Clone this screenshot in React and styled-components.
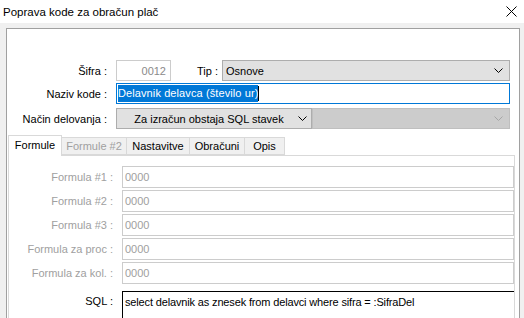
import React from 'react';
import styled, { createGlobalStyle } from 'styled-components';

const Global = createGlobalStyle`
  html, body { margin: 0; padding: 0; background: #f0f0f0; }
  body { font-family: "Liberation Sans", Arial, sans-serif; font-size: 11px; color: #000; }
  * { box-sizing: border-box; }
`;

const Window = styled.div`
  width: 524px;
  height: 318px;
  overflow: hidden;
  background: #f0f0f0;
  display: flex;
  flex-direction: column;
`;

const TitleBar = styled.div`
  height: 23px;
  flex: none;
  background: #fff;
  display: flex;
  align-items: center;
  justify-content: space-between;
  padding: 0 7px 0 3px;
  font-size: 11.5px;
`;

const Body = styled.div`
  flex: 1;
  min-height: 0;
  display: flex;
  padding: 5px 4px 0 6px;
`;

const Panel = styled.div`
  flex: 1;
  background: #fff;
  border: 1px solid #a0a0a0;
  border-bottom: none;
  display: flex;
  flex-direction: column;
  padding-top: 31px;
`;

const FormRow = styled.div`
  display: flex;
  align-items: center;
  height: 21px;
  margin-top: ${p => p.$gap || 0}px;
`;

const Label = styled.div`
  width: ${p => p.$w || 100}px;
  padding-right: ${p => p.$pr || 0}px;
  text-align: right;
  flex: none;
  color: ${p => (p.$muted ? '#a0a0a0' : '#000')};
  white-space: nowrap;
`;

const Field = styled.div`
  margin-left: ${p => p.$ml ?? 9}px;
  width: ${p => p.$w}px;
  height: 21px;
  flex: none;
  display: flex;
  align-items: center;
  border: 1px solid ${p => p.$border || '#cccccc'};
  background: ${p => p.$bg || '#fff'};
  color: ${p => p.$color || '#000'};
  justify-content: ${p => p.$justify || 'flex-start'};
  padding: 0 ${p => p.$pr ?? 3}px 0 ${p => p.$pl ?? 3}px;
  white-space: nowrap;
  overflow: hidden;
`;

const SelectText = styled.span`
  flex: 1;
  text-align: ${p => p.$align || 'left'};
`;

const Selected = styled.span`
  background: #0078d7;
  color: #fff;
  padding: 1px 0;
  line-height: 15px;
  letter-spacing: 0.1px;
`;

const Caret = styled.span`
  width: 1px;
  height: 15px;
  background: #000;
`;

const Chevron = ({ color = '#000' }) => (
  <svg width="9" height="5" viewBox="0 0 9 5" style={{ flex: 'none' }}>
    <polyline points="0.5,0.5 4.5,4.5 8.5,0.5" fill="none" stroke={color} strokeWidth="1" />
  </svg>
);

const TabArea = styled.div`
  flex: 1;
  display: flex;
  flex-direction: column;
  margin: 6px 4px 0 1px;
`;

const TabStrip = styled.div`
  display: flex;
  align-items: flex-end;
  height: 20px;
  position: relative;
  z-index: 1;
`;

const Tab = styled.div`
  width: ${p => p.$w}px;
  height: ${p => (p.$active ? 21 : 18)}px;
  margin-bottom: ${p => (p.$active ? -1 : 0)}px;
  margin-left: ${p => (p.$first ? 0 : -1)}px;
  border: 1px solid #d9d9d9;
  border-bottom: ${p => (p.$active ? 'none' : '1px solid #d9d9d9')};
  background: ${p => (p.$active ? '#fff' : '#f0f0f0')};
  color: ${p => (p.$disabled ? '#a0a0a0' : '#000')};
  display: flex;
  align-items: center;
  justify-content: center;
  padding-bottom: ${p => (p.$active ? 2 : 0)}px;
  font-size: 11px;
  white-space: nowrap;
`;

const TabPanel = styled.div`
  flex: 1;
  border: 1px solid #d9d9d9;
  border-bottom: none;
  background: #fff;
  padding-top: 10px;
  display: flex;
  flex-direction: column;
  gap: 2px;
`;

const FormulaRow = styled.div`
  display: grid;
  grid-template-columns: 104px 1fr;
  column-gap: 9px;
  align-items: ${p => (p.$top ? 'start' : 'center')};
  margin-top: ${p => p.$gap || 0}px;
`;

const FormulaInput = styled.div`
  height: 22px;
  border: 1px solid #cccccc;
  color: #a0a0a0;
  display: flex;
  align-items: center;
  padding-left: 2px;
`;

const SqlLabel = styled.div`
  text-align: right;
  padding-top: 4px;
`;

const SqlBox = styled.div`
  height: 40px;
  border-top: 1px solid #000;
  border-left: 1px solid #000;
  padding: 4px 2px;
  white-space: nowrap;
  letter-spacing: -0.15px;
`;

const formulas = [
  'Formula #1 :',
  'Formula #2 :',
  'Formula #3 :',
  'Formula za proc :',
  'Formula za kol. :',
];

const tabs = [
  { name: 'Formule', w: 54, active: true },
  { name: 'Formule #2', w: 66, disabled: true },
  { name: 'Nastavitve', w: 64 },
  { name: 'Obračuni', w: 56 },
  { name: 'Opis', w: 41 },
];

export default function App() {
  return (
    <Window>
      <Global />
      <TitleBar>
        <span>Poprava kode za obračun plač</span>
        <svg width="11" height="11" viewBox="0 0 11 11">
          <path d="M0.5 0.5 L10.5 10.5 M10.5 0.5 L0.5 10.5" stroke="#000" strokeWidth="1" />
        </svg>
      </TitleBar>
      <Body>
        <Panel>
          <FormRow>
            <Label>Šifra :</Label>
            <Field $w={55} $justify="flex-end" $color="#8a8a8a" $pr={4}>0012</Field>
            <Label $w={51} $pr={4}>Tip :</Label>
            <Field $ml={0} $w={288} $bg="#e1e1e1" $border="#adadad" $pr={6}>
              <SelectText>Osnove</SelectText>
              <Chevron />
            </Field>
          </FormRow>
          <FormRow $gap={2}>
            <Label>Naziv kode :</Label>
            <Field $w={394} $border="#0078d7" $pl={1}>
              <Selected>Delavnik delavca (število ur)</Selected>
              <Caret />
            </Field>
          </FormRow>
          <FormRow $gap={4}>
            <Label>Način delovanja :</Label>
            <Field $w={196} $bg="#e1e1e1" $border="#adadad" $pr={4}>
              <SelectText $align="center">Za izračun obstaja SQL stavek</SelectText>
              <Chevron />
            </Field>
            <Field $ml={0} $w={198} $bg="#cccccc" $border="#bfbfbf" $pr={6}>
              <SelectText />
              <Chevron color="#a6a6a6" />
            </Field>
          </FormRow>
          <TabArea>
            <TabStrip>
              {tabs.map((t, i) => (
                <Tab key={t.name} $w={t.w} $first={i === 0} $active={t.active} $disabled={t.disabled}>
                  {t.name}
                </Tab>
              ))}
            </TabStrip>
            <TabPanel>
              {formulas.map(f => (
                <FormulaRow key={f}>
                  <Label $w={104} $muted>{f}</Label>
                  <FormulaInput>0000</FormulaInput>
                </FormulaRow>
              ))}
              <FormulaRow $top $gap={5}>
                <SqlLabel>SQL :</SqlLabel>
                <SqlBox>select delavnik as znesek from delavci where sifra = :SifraDel</SqlBox>
              </FormulaRow>
            </TabPanel>
          </TabArea>
        </Panel>
      </Body>
    </Window>
  );
}
